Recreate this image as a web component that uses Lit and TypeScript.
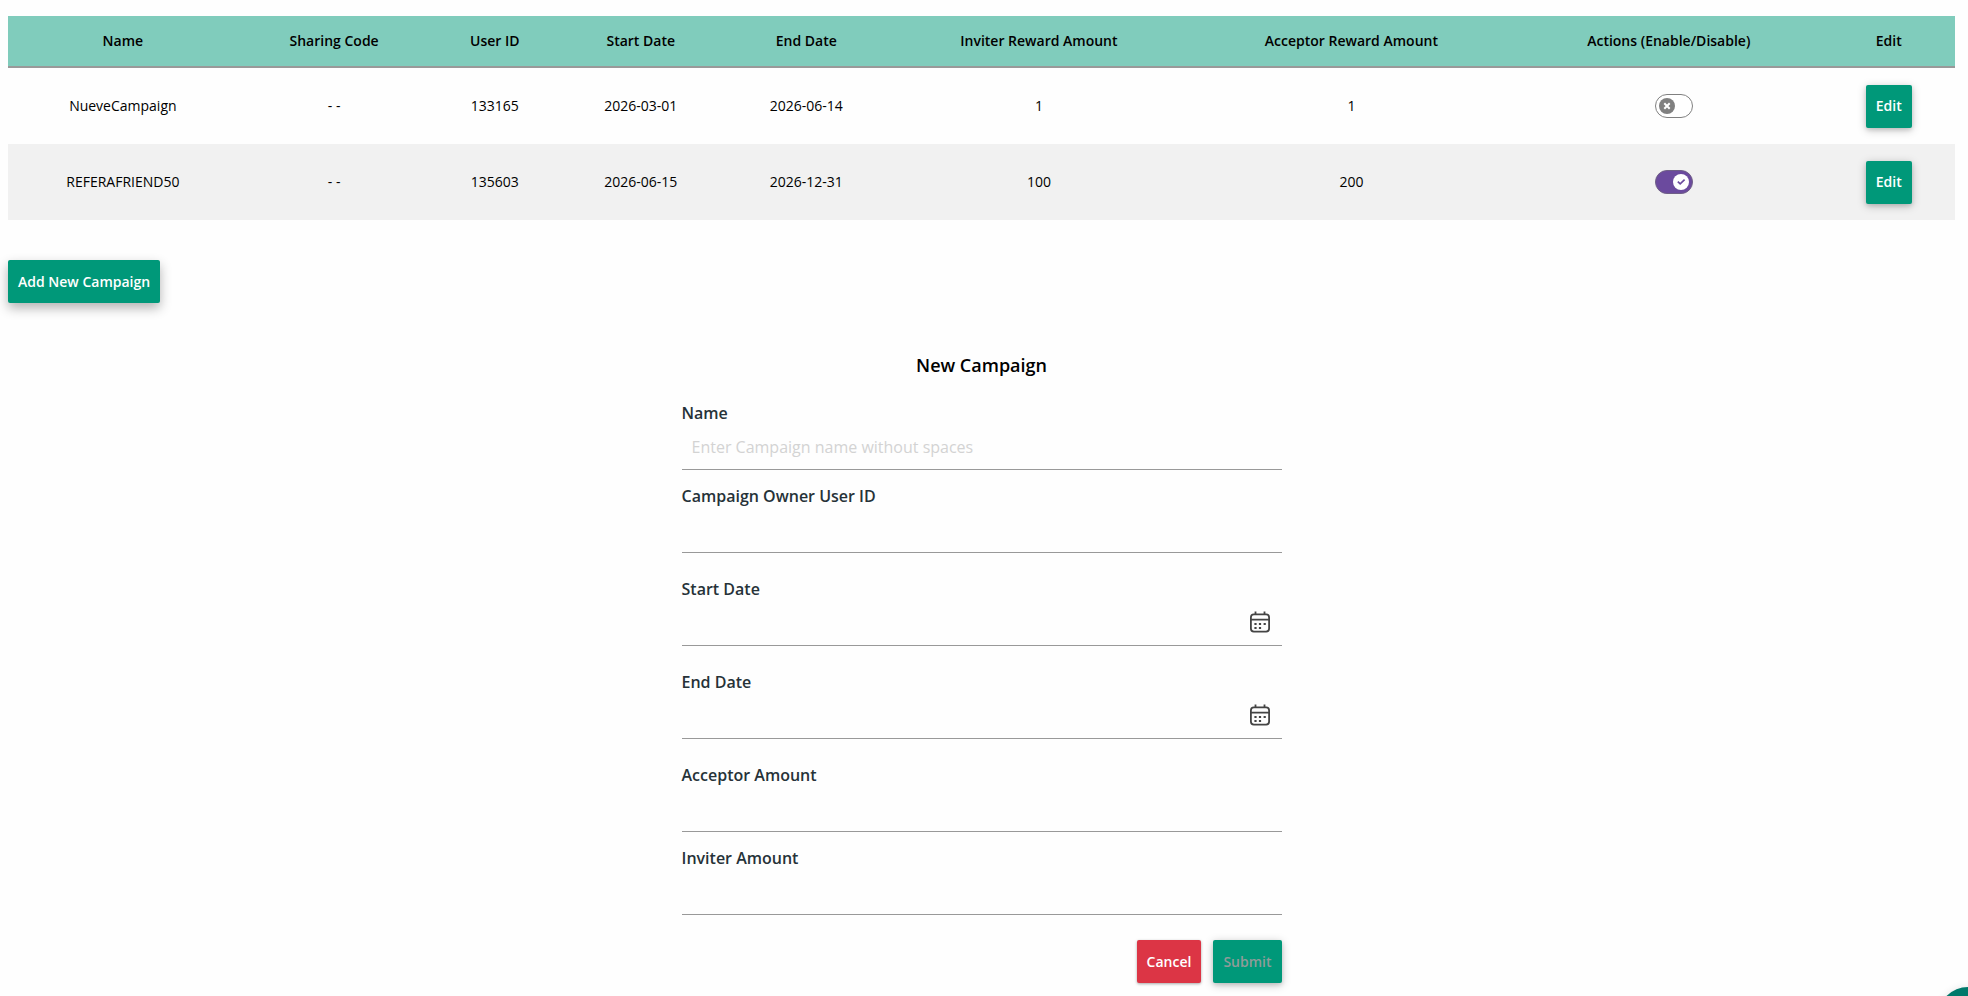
import { LitElement, html, css, svg } from "lit";
import { customElement, property, state } from "lit/decorators.js";

interface Campaign {
  name: string;
  code: string;
  userId: string;
  start: string;
  end: string;
  inviter: number;
  acceptor: number;
  enabled: boolean;
}

const buttonStyles = css`
  .btn {
    box-sizing: border-box;
    height: 43px;
    padding: 0 10px;
    border: 0;
    border-radius: 2px;
    background: #009879;
    color: #fff;
    font: 600 14px/20px "Open Sans", sans-serif;
    box-shadow: 0 2px 10px rgba(0, 0, 0, 0.22), 0 2px 4px rgba(0, 0, 0, 0.12);
    cursor: pointer;
  }
  .btn.large {
    box-shadow: 0 5px 12px rgba(0, 0, 0, 0.3);
  }
  .btn.danger {
    background: #dc3545;
    box-shadow: 0 1px 3px rgba(0, 0, 0, 0.35);
  }
  .btn:disabled {
    color: #8f9c99;
    cursor: default;
  }
`;

@customElement("toggle-switch")
export class ToggleSwitch extends LitElement {
  @property({ type: Boolean }) checked = false;
  @property() label = "";

  static styles = css`
    :host {
      display: inline-block;
      vertical-align: middle;
    }
    .switch {
      display: grid;
      cursor: pointer;
    }
    .box,
    .art {
      grid-area: 1 / 1;
      width: 38px;
      height: 24px;
      margin: 0;
    }
    .box {
      opacity: 0;
    }
    .art {
      display: block;
      pointer-events: none;
    }
  `;

  render() {
    return html`<label class="switch">
      <input
        class="box"
        type="checkbox"
        role="switch"
        aria-label=${this.label}
        .checked=${this.checked}
        @change=${(e: Event) => (this.checked = (e.target as HTMLInputElement).checked)}
      />
      <svg class="art" viewBox="0 0 38 24" aria-hidden="true">
        ${this.checked
          ? svg`<rect x=".5" y=".5" width="37" height="23" rx="11.5" fill="#6b4a9e" stroke="#6f5f86"/>
              <circle cx="26" cy="12" r="8" fill="#fff"/>
              <path d="M22.8 11.6l2.4 2.3 4.4-4.2" fill="none" stroke="#6b4a9e" stroke-width="1.7"/>`
          : svg`<rect x=".5" y=".5" width="37" height="23" rx="11.5" fill="#fff" stroke="#808080"/>
              <circle cx="12" cy="12" r="8" fill="#808080"/>
              <path d="M9.3 9.3l5.4 5.4M14.7 9.3l-5.4 5.4" stroke="#fff" stroke-width="2"/>`}
      </svg>
    </label>`;
  }
}

@customElement("campaign-table")
export class CampaignTable extends LitElement {
  @property({ attribute: false }) campaigns: Campaign[] = [];

  static styles = [
    buttonStyles,
    css`
      :host {
        display: block;
      }
      .table {
        width: 100%;
        table-layout: fixed;
        border-collapse: separate;
        border-spacing: 0;
        font-size: 14px;
        line-height: 20px;
        text-align: center;
      }
      .c-name { width: 11.8%; }
      .c-code { width: 9.9%; }
      .c-user { width: 6.6%; }
      .c-start { width: 8.4%; }
      .c-end { width: 8.6%; }
      .c-inviter { width: 15.3%; }
      .c-acceptor { width: 16.8%; }
      .c-actions { width: 15.8%; }
      .c-edit { width: 6.8%; }
      .head {
        height: 52px;
        box-sizing: border-box;
        padding: 0;
        background: #80ccbc;
        border-bottom: 2px solid #999;
        font-weight: 600;
        white-space: nowrap;
      }
      .cell {
        height: 76px;
        box-sizing: border-box;
        padding: 0;
        white-space: nowrap;
      }
      .row:nth-child(even) {
        background: #f1f1f1;
      }
      .toggle {
        padding-left: 10px;
      }
    `,
  ];

  render() {
    const columns = [
      ["name", "Name"],
      ["code", "Sharing Code"],
      ["user", "User ID"],
      ["start", "Start Date"],
      ["end", "End Date"],
      ["inviter", "Inviter Reward Amount"],
      ["acceptor", "Acceptor Reward Amount"],
      ["actions", "Actions (Enable/Disable)"],
      ["edit", "Edit"],
    ];
    return html`<table class="table">
      <thead>
        <tr>
          ${columns.map(([key, text]) => html`<th class="head c-${key}" scope="col">${text}</th>`)}
        </tr>
      </thead>
      <tbody>
        ${this.campaigns.map(
          (c) => html`<tr class="row">
            <td class="cell">${c.name}</td>
            <td class="cell">${c.code}</td>
            <td class="cell">${c.userId}</td>
            <td class="cell">${c.start}</td>
            <td class="cell">${c.end}</td>
            <td class="cell">${c.inviter}</td>
            <td class="cell">${c.acceptor}</td>
            <td class="cell toggle">
              <toggle-switch .checked=${c.enabled} .label=${c.name}></toggle-switch>
            </td>
            <td class="cell"><button class="btn" type="button">Edit</button></td>
          </tr>`
        )}
      </tbody>
    </table>`;
  }
}

@customElement("campaign-form")
export class CampaignForm extends LitElement {
  static styles = [
    buttonStyles,
    css`
      :host {
        display: block;
      }
      .form {
        max-width: 600px;
        margin: 0 auto;
      }
      .title {
        margin: 0 0 23px;
        font-size: 18px;
        line-height: 26px;
        font-weight: 600;
        text-align: center;
      }
      .field {
        display: flex;
        flex-direction: column;
        margin-bottom: 14px;
      }
      .field.spaced {
        margin-bottom: 24px;
      }
      .label {
        color: #263238;
        font-size: 16px;
        line-height: 24px;
        font-weight: 600;
      }
      .control {
        display: flex;
        align-items: center;
        height: 44px;
        border-bottom: 1px solid #999;
      }
      .input {
        flex: 1;
        min-width: 0;
        padding: 0 10px;
        border: 0;
        outline: 0;
        background: transparent;
        color: #263238;
        font: 400 16px/24px "Open Sans", sans-serif;
      }
      .input::placeholder {
        color: #d3d3d3;
        opacity: 1;
      }
      .calendar {
        display: grid;
        margin: 0 10px 2px 0;
        padding: 0;
        border: 0;
        background: none;
        cursor: pointer;
      }
      .icon {
        display: block;
        width: 24px;
        height: 24px;
      }
      .actions {
        display: flex;
        justify-content: flex-end;
        gap: 12px;
        padding-top: 11px;
      }
    `,
  ];

  private field(id: string, label: string, opts: { spaced?: boolean; date?: boolean; placeholder?: string } = {}) {
    return html`<div class="field ${opts.spaced ? "spaced" : ""}">
      <label class="label" for=${id}>${label}</label>
      <div class="control">
        <input class="input" id=${id} type="text" autocomplete="off" placeholder=${opts.placeholder ?? ""} />
        ${opts.date
          ? html`<button class="calendar" type="button" aria-label="${label} calendar">
              <svg class="icon" viewBox="0 0 24 24" fill="none" stroke="#444" stroke-width="1.8" aria-hidden="true">
                <rect x="2.9" y="4.4" width="18.2" height="17.2" rx="3" />
                <path d="M2.9 9.6h18.2M7.5 1.5v3M16.5 1.5v3" />
                <path d="M6.4 14h2.2M10.9 14h2.2M15.6 14h2.2M6.4 18h2.2M10.9 18h2.2" stroke-width="2.2" />
              </svg>
            </button>`
          : ""}
      </div>
    </div>`;
  }

  render() {
    return html`<form class="form" @submit=${(e: Event) => e.preventDefault()}>
      <h2 class="title">New Campaign</h2>
      ${this.field("name", "Name", { placeholder: "Enter Campaign name without spaces" })}
      ${this.field("owner", "Campaign Owner User ID", { spaced: true })}
      ${this.field("start", "Start Date", { spaced: true, date: true })}
      ${this.field("end", "End Date", { spaced: true, date: true })}
      ${this.field("acceptor", "Acceptor Amount")}
      ${this.field("inviter", "Inviter Amount")}
      <div class="actions">
        <button class="btn danger" type="button">Cancel</button>
        <button class="btn" type="submit" disabled>Submit</button>
      </div>
    </form>`;
  }
}

@customElement("app-root")
export class AppRoot extends LitElement {
  @state() private campaigns: Campaign[] = [
    { name: "NueveCampaign", code: "- -", userId: "133165", start: "2026-03-01", end: "2026-06-14", inviter: 1, acceptor: 1, enabled: false },
    { name: "REFERAFRIEND50", code: "- -", userId: "135603", start: "2026-06-15", end: "2026-12-31", inviter: 100, acceptor: 200, enabled: true },
  ];

  static styles = [
    buttonStyles,
    css`
      :host {
        display: block;
        box-sizing: border-box;
        min-height: 100vh;
        padding: 16px 13px 12px 8px;
        background: #fefefe;
        color: #000;
        font-family: "Open Sans", sans-serif;
      }
      .toolbar {
        padding: 40px 0 49px;
      }
      .add {
        display: block;
      }
      .chat {
        position: fixed;
        right: -30px;
        bottom: -51px;
        width: 60px;
        height: 60px;
        padding: 0;
        border: 0;
        border-radius: 50%;
        background: #00796b;
        box-shadow: 0 1px 8px rgba(0, 0, 0, 0.12);
        cursor: pointer;
      }
    `,
  ];

  render() {
    return html`
      <campaign-table .campaigns=${this.campaigns}></campaign-table>
      <div class="toolbar">
        <button class="btn large add" type="button">Add New Campaign</button>
      </div>
      <campaign-form></campaign-form>
      <button class="chat" type="button" aria-label="Chat"></button>
    `;
  }
}
